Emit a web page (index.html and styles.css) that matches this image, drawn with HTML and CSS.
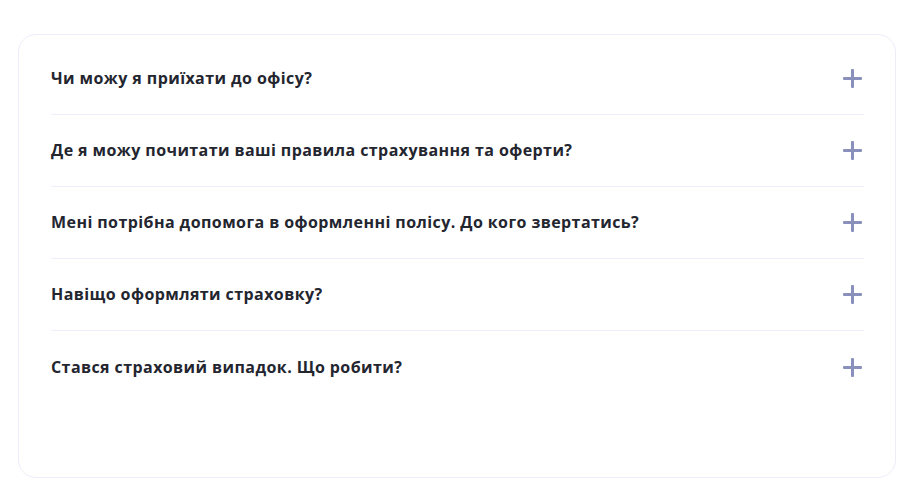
FILE: index.html
```html
<!DOCTYPE html>
<html lang="uk">
<head>
<meta charset="utf-8">
<link rel="stylesheet" href="styles.css">
</head>
<body>
<div class="page">
  <div class="faq">
    <div class="item"><span class="q">Чи можу я приїхати до офісу?</span><span class="plus"></span></div>
    <div class="item"><span class="q">Де я можу почитати ваші правила страхування та оферти?</span><span class="plus"></span></div>
    <div class="item"><span class="q">Мені потрібна допомога в оформленні полісу. До кого звертатись?</span><span class="plus"></span></div>
    <div class="item"><span class="q">Навіщо оформляти страховку?</span><span class="plus"></span></div>
    <div class="item"><span class="q">Стався страховий випадок. Що робити?</span><span class="plus"></span></div>
  </div>
</div>
</body>
</html>
```
FILE: styles.css
```css
* { box-sizing: border-box; }
html, body { margin: 0; padding: 0; background: #ffffff; }
body { font-family: "Open Sans", "Noto Sans", sans-serif; }
.page { padding: 34px 11px 0 18px; }
.faq {
  border: 1px solid #eeecf9;
  border-radius: 18px;
  height: 444px;
  padding: 8px 31px 0 32px;
  background: #fff;
}
.item {
  height: 72px;
  display: flex;
  align-items: center;
  justify-content: space-between;
  border-bottom: 1px solid #efeefa;
}
.item:last-child { border-bottom: none; }
.q {
  font-size: 16px;
  font-weight: 700;
  color: #23252f;
  letter-spacing: 0.42px;
  margin-top: -1px;
}
.plus {
  position: relative;
  width: 19px;
  height: 19px;
  margin-right: 2px;
  flex: none;
}
.plus::before, .plus::after {
  content: "";
  position: absolute;
  background: #8890bb;
  border-radius: 1px;
}
.plus::before { left: 0; right: 0; top: 8px; height: 3px; }
.plus::after { top: 0; bottom: 0; left: 8px; width: 3px; }
```
